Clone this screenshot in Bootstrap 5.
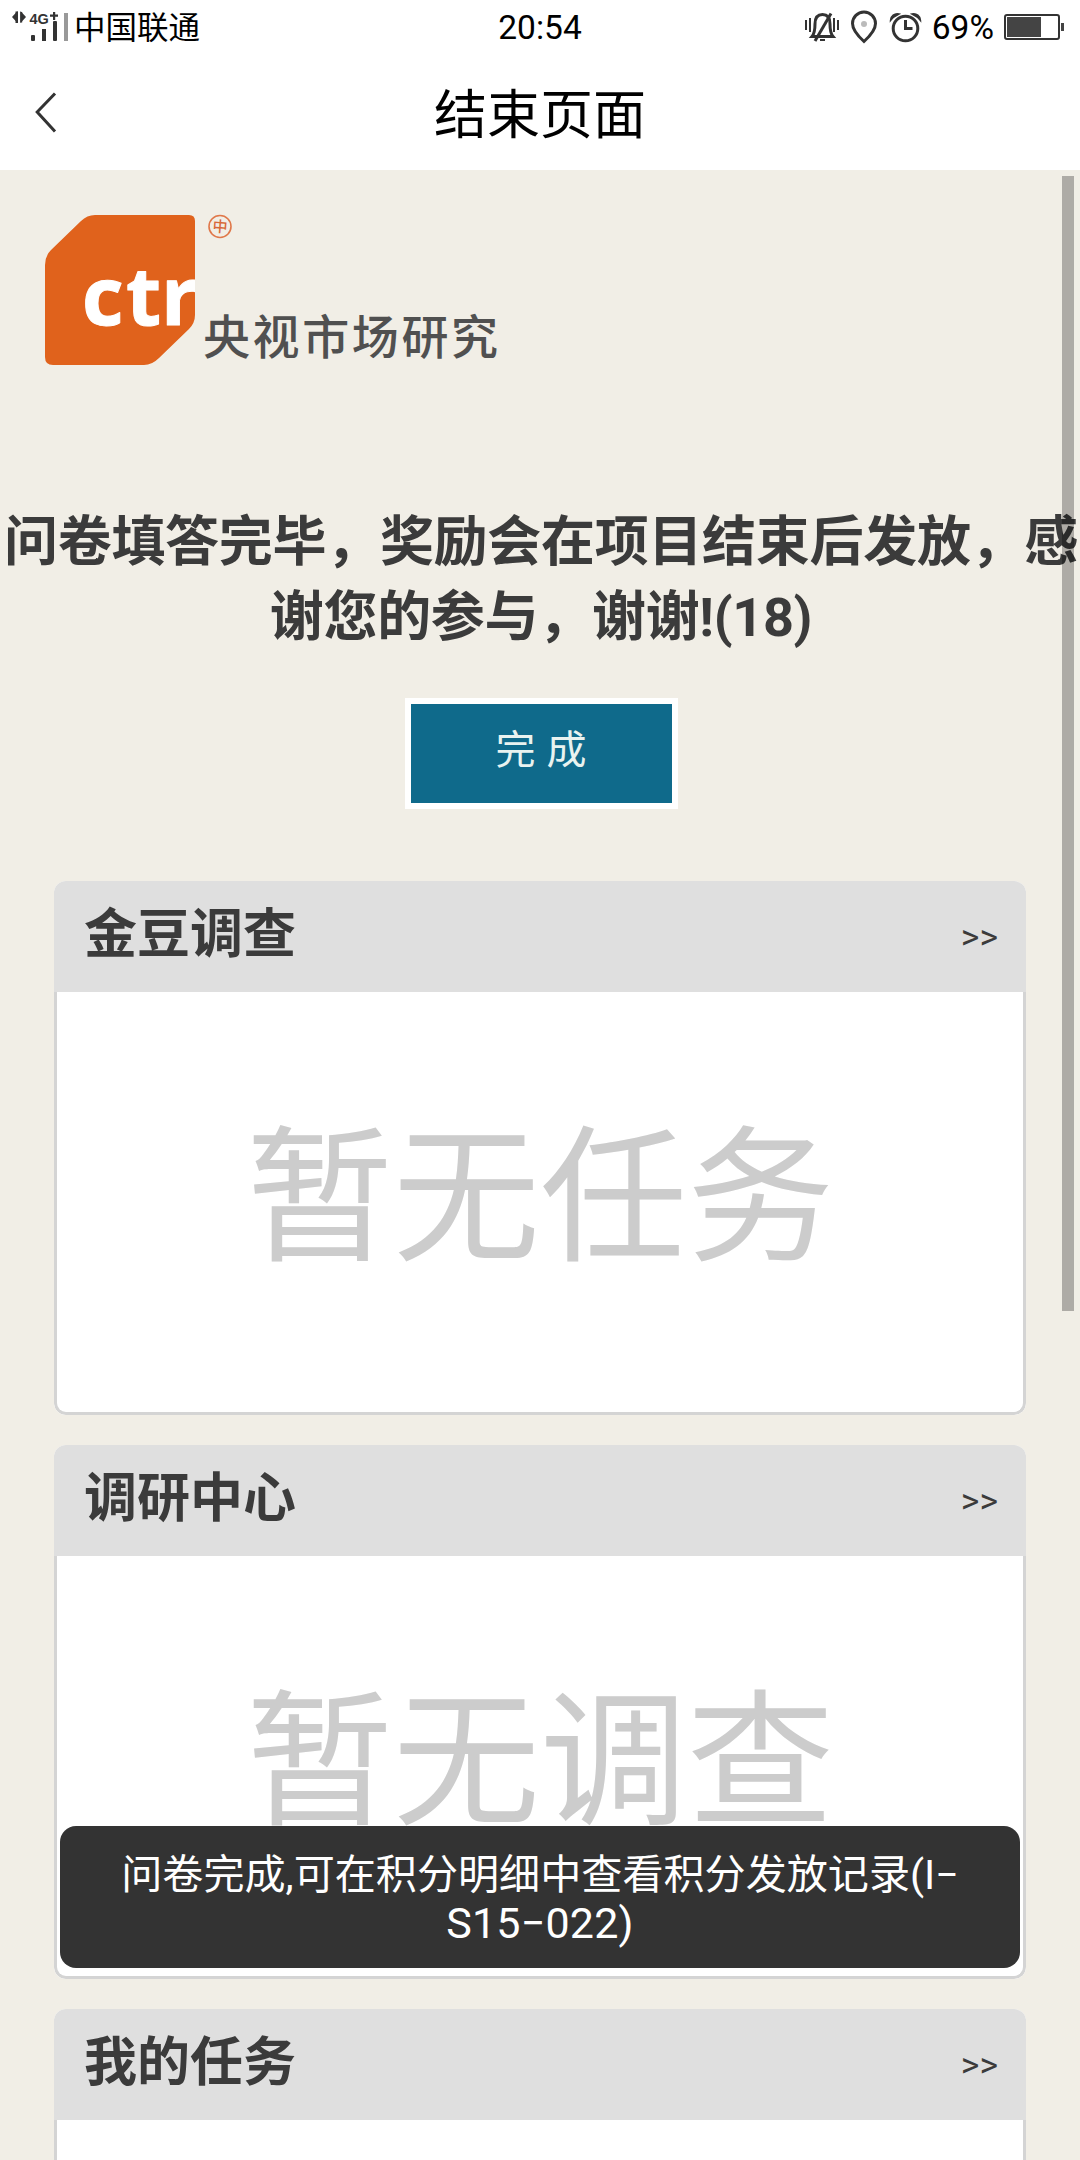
<!DOCTYPE html>
<html lang="zh-CN">
<head>
<meta charset="utf-8">
<meta name="viewport" content="width=device-width, initial-scale=1">
<title>结束页面</title>
<link href="https://cdn.jsdelivr.net/npm/bootstrap@5.3.0/dist/css/bootstrap.min.css" rel="stylesheet">
<style>
  body { width: 1080px; height: 2160px; overflow: hidden; background: #f1eee6; color: #3b3b3b; font-family: Roboto, "Noto Sans CJK SC", sans-serif; line-height: 1.5; }
  .app-top { height: 170px; color: #000; }
  .status-row { height: 56px; padding: 0 16px 0 12px; font-size: 33.5px; line-height: 56px; }
  .carrier { font-size: 31.5px; margin-left: 4px; padding-top: 2px; }
  .battery-pct { margin: 0 10px 0 2px; }
  .title-row { height: 114px; padding-left: 35px; }
  .page-title { font-size: 53px; line-height: 114px; padding-top: 5px; }
  .page-scroll { height: 1990px; }
  .brand { height: 324px; padding: 44px 0 0 45px; }
  .done-msg { font-size: 54px; letter-spacing: -.3px; line-height: 75px; height: 204px; padding: 11px 0 0 2px; font-weight: 700; white-space: nowrap; }
  .done-btn { width: 273px; height: 111px; border: 6px solid #fff; border-radius: 0; background: #0f6a8b; color: #e9f3f0; font-size: 40px; word-spacing: 1px; line-height: 88px; padding: 0 0 5px; margin-left: 2px; }
  .task-list { margin: 72px 54px 0; gap: 30px; }
  .task-card { height: 534px; border: 0; border-radius: 12px; background: #fff; overflow: hidden; flex: none; }
  .task-head { height: 111px; padding: 0 28px 0 30px; background: #dfdfdf; }
  .task-title { font-size: 53px; line-height: 108px; font-weight: 700; }
  .task-more { font-size: 35.5px; line-height: 112px; }
  .task-body { border: 3px solid #d4d4d4; border-top: 0; border-radius: 0 0 12px 12px; color: #ccc; font-size: 147px; line-height: 1; padding-bottom: 5px; }
  .toast-tip { left: 60px; top: 1826px; width: 960px; height: 142px; border-radius: 16px; background: rgba(0,0,0,.8); color: #fff; font-size: 41.100px; line-height: 48px; padding-top: 25px; }
  .toast-code { font-size: 43px; letter-spacing: .2px; }
  .scroll-thumb { left: 1062px; top: 176px; width: 12px; height: 1135px; background: rgba(0,0,0,.28); }
</style>
</head>
<body class="position-relative">
<header class="app-top bg-white">
  <div class="status-row d-flex align-items-center position-relative">
    <svg width="58" height="44" viewBox="0 0 58 44" fill="#333">
      <path d="M0 11 5.500 5v12ZM14 11 8.500 5v12Z"/><path d="M3.500 5.500h2.500v11.500H3.500ZM8.200 6h2v10.500h-2Z"/>
      <text x="17.500" y="18" font-family="Liberation Sans, sans-serif" font-weight="700" font-size="14.500">4G</text>
      <path d="M38 8.500h8v2.200h-8zM41 6h2.200v8H41z"/>
      <rect x="19" y="29" width="4" height="6" rx="1"/><rect x="30" y="23" width="4" height="12"/><rect x="41" y="15" width="4" height="20" rx="1"/><rect x="52" y="7" width="4" height="28" fill="#999"/>
    </svg>
    <span class="carrier">中国联通</span>
    <span class="position-absolute start-50 translate-middle-x">20:54</span>
    <div class="ms-auto d-flex align-items-center">
      <svg width="125" height="56" viewBox="804 0 125 56" fill="none" stroke="#333" stroke-width="3">
        <path d="M805 20v10M809 18v14M833 18v14M837 20v10" stroke-width="2"/>
        <path d="M811 36.500Q814 33 814 24 814 14.500 821.500 14.500 829 14.500 829 24 829 33 832 36.500Z"/>
        <path d="M830 13.500 814 41"/><path d="M819 40h5" stroke-width="2"/>
        <path d="M863 41.500Q851.500 31 851.500 23.500A11.500 11.500 0 0 1 874.500 23.500Q874.500 31 863 41.500Z"/>
        <circle cx="863" cy="24" r="3" fill="#bbb" stroke="none"/>
        <circle cx="904.500" cy="28.500" r="12.300"/><path d="M904.500 20v8.500h7"/>
        <path d="M889.500 20.500A6.800 6.800 0 0 1 898 14Q892.500 16.500 889.500 20.500ZM919.500 20.500A6.800 6.800 0 0 0 911 14Q916.500 16.500 919.500 20.500Z" fill="#333" stroke-width="1.500"/>
      </svg>
      <span class="battery-pct">69%</span>
      <svg width="60" height="56" viewBox="0 0 60 56"><rect x="1" y="15" width="54" height="24" rx="2" fill="#fff" stroke="#333" stroke-width="2"/><path d="M3 17h34v20H3zM57 23h3v8h-3z" fill="#444"/></svg>
    </div>
  </div>
  <div class="title-row d-flex align-items-center position-relative">
    <svg width="22" height="42" viewBox="0 0 22 42" fill="none" stroke="#333" stroke-width="3"><path d="M20 1.500 2.200 20 20 39.500"/></svg>
    <h1 class="page-title fw-normal m-0 position-absolute start-50 translate-middle-x text-nowrap">结束页面</h1>
  </div>
</header>

<main class="page-scroll overflow-hidden">
  <div class="brand">
    <svg width="460" height="160" viewBox="45 214 460 160">
      <defs><clipPath id="tile"><path d="M95 215H189Q195 215 195 221V315Q195 323 189 329L159 358Q152 365 144 365H53Q45 365 45 357V265Q45 256 51 250L81 221Q87 215 95 215Z"/></clipPath></defs>
      <g clip-path="url(#tile)"><rect x="45" y="215" width="150" height="150" fill="#e0621c"/>
        <text x="82 126 161" y="324.500" font-family="Open Sans, Noto Sans, sans-serif" font-weight="700" font-size="81" fill="#fff" stroke="#fff" stroke-width="1" stroke-linejoin="round">ctr</text>
      </g>
      <circle cx="220" cy="226.500" r="11" fill="none" stroke="#e0784a" stroke-width="1.600"/>
      <text x="220" y="232" font-size="15" text-anchor="middle" fill="#d8693a" font-weight="500" font-family="Noto Sans CJK SC, sans-serif" transform="rotate(4 220 227)">中</text>
      <text x="203" y="354" font-size="47" textLength="295" fill="#505050" font-weight="500" font-family="Noto Sans CJK SC, sans-serif">央视市场研究</text>
    </svg>
  </div>
  <div class="done-msg text-center">问卷填答完毕，奖励会在项目结束后发放，感<br>谢您的参与，谢谢!(18)</div>
  <div class="text-center d-flex justify-content-center"><button class="btn done-btn" type="button">完 成</button></div>

  <div class="task-list d-flex flex-column">
    <section class="card task-card">
      <div class="task-head d-flex justify-content-between"><span class="task-title">金豆调查</span><span class="task-more">&gt;&gt;</span></div>
      <div class="task-body flex-grow-1 d-flex align-items-center justify-content-center">暂无任务</div>
    </section>
    <section class="card task-card">
      <div class="task-head d-flex justify-content-between"><span class="task-title">调研中心</span><span class="task-more">&gt;&gt;</span></div>
      <div class="task-body flex-grow-1 d-flex align-items-center justify-content-center">暂无调查</div>
    </section>
    <section class="card task-card">
      <div class="task-head d-flex justify-content-between"><span class="task-title">我的任务</span><span class="task-more">&gt;&gt;</span></div>
      <div class="task-body flex-grow-1"></div>
    </section>
  </div>
</main>

<div class="toast-tip position-absolute text-center" role="status">问卷完成,可在积分明细中查看积分发放记录(I−<br><span class="toast-code">S15−022)</span></div>
<div class="scroll-thumb position-absolute"></div>
<script src="https://cdn.jsdelivr.net/npm/bootstrap@5.3.0/dist/js/bootstrap.bundle.min.js"></script>
</body>
</html>
